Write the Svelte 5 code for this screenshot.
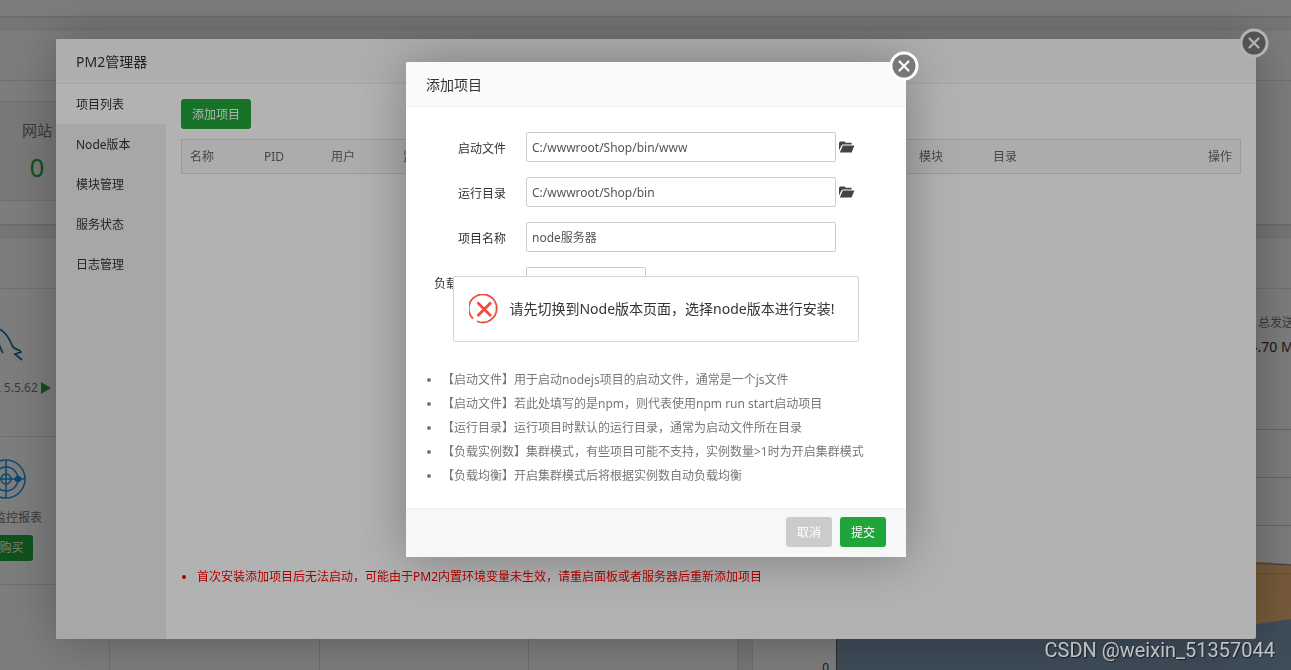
<script>
  const menu = ['项目列表', 'Node版本', '模块管理', '服务状态', '日志管理'];
  let active = $state('项目列表');

  const columns = [
    { title: '名称', cls: 'w-name' },
    { title: 'PID', cls: 'w-pid' },
    { title: '用户', cls: 'w-user' },
    { title: '监听端口', cls: '' },
    { title: '状态', cls: '' },
    { title: '重启', cls: '' },
    { title: '时间', cls: '' },
    { title: 'CPU', cls: '' },
    { title: '内存', cls: '' },
    { title: '模块', cls: 'w-module' },
    { title: '目录', cls: 'w-path' },
    { title: '操作', cls: 'w-action' }
  ];

  const tips = [
    '【启动文件】用于启动nodejs项目的启动文件，通常是一个js文件',
    '【启动文件】若此处填写的是npm，则代表使用npm run start启动项目',
    '【运行目录】运行项目时默认的运行目录，通常为启动文件所在目录',
    '【负载实例数】集群模式，有些项目可能不支持，实例数量>1时为开启集群模式',
    '【负载均衡】开启集群模式后将根据实例数自动负载均衡'
  ];

  let form = $state({
    run: 'C:/wwwroot/Shop/bin/www',
    path: 'C:/wwwroot/Shop/bin',
    name: 'node服务器',
    count: ''
  });
</script>

{#snippet closeIcon()}
  <svg viewBox="0 0 30 30" width="30" height="30" aria-hidden="true">
    <circle cx="15" cy="15" r="13" fill="#787878" stroke="#fff" stroke-width="3" />
    <path d="M10.5 10.5l9 9M19.5 10.5l-9 9" stroke="#fff" stroke-width="2.2" stroke-linecap="round" />
  </svg>
{/snippet}

{#snippet folderIcon()}
  <svg viewBox="0 0 16 12" width="16" height="12" aria-hidden="true">
    <path d="M0 9.5V1.8L1 .6h4.6l1 1.2h6v1.8h-9l-1.2.8z" fill="#444" />
    <path d="M3.8 4.5h11.6l-2.8 7H.8z" fill="#444" />
  </svg>
{/snippet}

<!-- dashboard under the windows -->
<div class="backdrop">
  <div class="dashboard">
    <div class="topbar"></div>
    <section class="card overview">
      <div class="card-head"></div>
      <div class="counts">
        <div class="count">
          <span>网站</span>
          <a href="#site">0</a>
        </div>
      </div>
    </section>
    <div class="halves">
      <section class="card">
        <div class="card-head"></div>
        <div class="softs">
          <div class="soft">
            <svg class="dolphin" viewBox="0 0 56 48" width="56" height="48" aria-hidden="true">
              <path d="M2 16C6 4 14 4 23 9C30 13 32 20 35 26C38 29 43 29 43 31L37 33L44 39" fill="none" stroke="#1c6f9f" stroke-width="1.8" />
              <path d="M20 22C22 25 23 29 25 32" fill="none" stroke="#1c6f9f" stroke-width="1.8" />
            </svg>
            <div class="soft-name">
              MySQL 5.5.62
              <svg viewBox="0 0 10 12" width="10" height="12" aria-hidden="true">
                <path d="M0 0L10 6L0 12z" fill="#20a53a" />
              </svg>
            </div>
          </div>
          <div class="soft"></div>
          <div class="soft"></div>
          <div class="soft"></div>
          <div class="soft">
            <svg viewBox="0 0 40 40" width="40" height="40" fill="none" stroke="#1296db" stroke-width="1.5" aria-hidden="true">
              <circle cx="20" cy="20" r="19" />
              <circle cx="20" cy="20" r="12" />
              <circle cx="20" cy="20" r="5" />
              <path d="M20 1V39M1 20H39" />
              <circle cx="32" cy="20" r="2.5" fill="#1296db" />
            </svg>
            <div class="soft-name">网站监控报表</div>
            <button class="buy">购买</button>
          </div>
          <div class="soft"></div>
          <div class="soft"></div>
          <div class="soft"></div>
          <div class="soft"></div>
          <div class="soft"></div>
          <div class="soft"></div>
          <div class="soft"></div>
        </div>
      </section>
      <section class="card">
        <div class="card-head"></div>
        <div class="stats">
          <div></div>
          <div></div>
          <div><span>总发送</span><b>4.70 MB</b></div>
          <div></div>
        </div>
        <div class="chart">
          <span class="zero">0</span>
          <svg viewBox="0 0 754 290" width="754" height="290" aria-hidden="true">
            <path d="M0 48.5H754M0 96.5H754M0 144.5H754" stroke="#ccc" />
            <path d="M0 200C200 170 400 178 456 183V290H0z" fill="#f2b97a" />
            <path d="M0 250H380L421 243L456 238V290H0z" fill="#7f9db6" />
            <path d="M380 182.500L420 182.500L456 184" fill="none" stroke="#7a8a99" />
            <path d="M420 192.500H456" stroke="#d3a069" />
            <path d="M.5 0V290" stroke="#555" />
          </svg>
        </div>
      </section>
    </div>
  </div>
</div>

<div class="layer shade manager-layer">
  <div class="window manager" role="dialog" aria-label="PM2管理器">
    <header>PM2管理器</header>
    <button class="close" aria-label="关闭">{@render closeIcon()}</button>
    <div class="manager-body">
      <nav>
        {#each menu as item}
          <button class:active={active === item} onclick={() => (active = item)}>{item}</button>
        {/each}
      </nav>
      <main>
        <button class="btn green">添加项目</button>
        <table>
          <thead>
            <tr>
              {#each columns as col}
                <th class={col.cls}>{col.title}</th>
              {/each}
            </tr>
          </thead>
        </table>
        <ul class="notice">
          <li>首次安装添加项目后无法启动，可能由于PM2内置环境变量未生效，请重启面板或者服务器后重新添加项目</li>
        </ul>
      </main>
    </div>
  </div>
</div>

<div class="layer shade add-layer">
  <form class="window add" aria-label="添加项目" onsubmit={(e) => e.preventDefault()}>
    <header>添加项目</header>
    <button type="button" class="close" aria-label="关闭">{@render closeIcon()}</button>
    <div class="fields">
      <div class="line">
        <label for="run">启动文件</label>
        <input id="run" type="text" bind:value={form.run} />
        <button type="button" class="pick" aria-label="选择文件">{@render folderIcon()}</button>
      </div>
      <div class="line">
        <label for="path">运行目录</label>
        <input id="path" type="text" bind:value={form.path} />
        <button type="button" class="pick" aria-label="选择目录">{@render folderIcon()}</button>
      </div>
      <div class="line">
        <label for="name">项目名称</label>
        <input id="name" type="text" bind:value={form.name} />
      </div>
      <div class="line">
        <label for="count">负载实例数量</label>
        <input id="count" class="short" type="text" bind:value={form.count} />
      </div>
    </div>
    <ul class="tips">
      {#each tips as tip}
        <li>{tip}</li>
      {/each}
    </ul>
    <footer>
      <button type="button" class="btn gray">取消</button>
      <button type="submit" class="btn green">提交</button>
    </footer>
  </form>
</div>

<div class="layer msg-layer">
  <div class="msg" role="alert">
    <svg viewBox="0 0 30 30" width="30" height="30" fill="none" stroke="#f04c3e" aria-hidden="true">
      <path d="M4 24.5A14 14 0 1 1 8 27.2" stroke-width="1.8" />
      <path d="M8.5 8.5L22 22M22 8.5L8.5 22" stroke-width="2.8" />
    </svg>
    <span>请先切换到Node版本页面，选择node版本进行安装!</span>
  </div>
</div>

<div class="watermark">CSDN @weixin_51357044</div>

<style>
  :global(body) {
    background: #f0f0f1;
  }

  :global(#app) {
    font: 12px/24px "Noto Sans", "Noto Sans CJK SC", sans-serif;
    color: #333;
  }

  button,
  input {
    box-sizing: border-box;
    font: inherit;
    color: inherit;
  }

  button {
    padding: 0;
    border: 0;
    background: none;
    cursor: pointer;
  }

  ul {
    margin: 0;
  }

  svg {
    display: block;
    flex: none;
  }

  /* dashboard, scrolled sideways behind the windows */
  .backdrop {
    height: 100vh;
    overflow: hidden;
  }

  .dashboard {
    min-width: 1689px;
    margin-left: -99px;
  }

  .topbar {
    height: 16px;
    margin-bottom: 15px;
    background: #fff;
    box-shadow: 0 1px 2px rgba(0, 0, 0, .15);
  }

  .card {
    background: #fff;
    box-shadow: 0 1px 2px rgba(0, 0, 0, .15);
  }

  .card-head {
    height: 49px;
    border-bottom: 1px solid #e4e4e4;
  }

  .overview {
    margin-bottom: 15px;
  }

  .counts {
    display: flex;
    padding: 20px 0 23px;
  }

  .count {
    display: flex;
    flex-direction: column;
    align-items: center;
    box-sizing: border-box;
    width: 272px;
    height: 100px;
    padding-top: 16px;
    border: 1px solid #e4e4e4;
    background: #f6f6f6;
    font-size: 15px;
    color: #777;
  }

  .count a {
    margin-top: 7px;
    font-size: 26px;
    line-height: 36px;
    color: #20a53a;
    text-decoration: none;
  }

  .halves {
    display: grid;
    grid-template-columns: 1fr 1fr;
    gap: 15px;
  }

  .softs {
    display: grid;
    grid-template-columns: repeat(4, 1fr);
  }

  .soft {
    display: flex;
    flex-direction: column;
    align-items: center;
    box-sizing: border-box;
    height: 148px;
    padding: 22px 0 0 2px;
    border-right: 1px solid #e0e0ee;
    border-bottom: 1px solid #e0e0ee;
    color: #777;
  }

  .dolphin {
    margin-top: 10px;
  }

  .soft-name {
    display: flex;
    align-items: center;
    gap: 3px;
    margin-top: 7px;
    white-space: nowrap;
  }

  .buy {
    height: 26px;
    margin-top: 5px;
    padding: 0 9px 0 20px;
    border-radius: 3px;
    background: #20a53a;
    color: #fff;
  }

  .stats {
    display: grid;
    grid-template-columns: repeat(4, 1fr);
    height: 92px;
    text-align: center;
    color: #777;
  }

  .stats div {
    display: flex;
    flex-direction: column;
    padding-top: 22px;
  }

  .stats b {
    font-size: 14px;
    font-weight: 400;
    color: #333;
  }

  .chart {
    display: flex;
    justify-content: flex-end;
    align-items: flex-end;
    gap: 7px;
  }

  .zero {
    line-height: 6px;
  }

  /* layered windows */
  .layer {
    position: fixed;
    inset: 0;
    display: flex;
    justify-content: center;
    align-items: flex-start;
    padding-left: 21px;
  }

  .shade {
    background: rgba(0, 0, 0, .3);
  }

  .manager-layer {
    padding-top: 39px;
  }

  .add-layer {
    padding-top: 62px;
  }

  .msg-layer {
    padding-top: 276px;
  }

  .window {
    position: relative;
    border-radius: 2px;
    background: #fff;
    box-shadow: 1px 1px 50px rgba(0, 0, 0, .3);
  }

  header {
    height: 44px;
    padding: 0 20px;
    border-bottom: 1px solid #eee;
    border-radius: 2px 2px 0 0;
    background: #fafafa;
    font-size: 14px;
    line-height: 46px;
  }

  .close {
    position: absolute;
    top: -11px;
    right: -13px;
  }

  .manager {
    width: 1200px;
    max-width: 93vw;
  }

  .manager-body {
    display: flex;
    min-height: 555px;
  }

  nav {
    display: flex;
    flex-direction: column;
    width: 110px;
    background: #f0f0f1;
  }

  nav button {
    height: 40px;
    padding: 2px 0 0 20px;
    text-align: left;
  }

  nav .active {
    background: #fff;
  }

  main {
    display: flex;
    flex: 1;
    flex-direction: column;
    align-items: flex-start;
    min-width: 0;
    padding: 15px;
  }

  .btn {
    height: 30px;
    padding: 2px 11px 0;
    border-radius: 3px;
    color: #fff;
  }

  .green {
    background: #20a53a;
  }

  .gray {
    background: #cbcbcb;
  }

  table {
    width: 100%;
    margin-top: 10px;
    border: 1px solid #ddd;
    border-spacing: 0;
    table-layout: fixed;
    background: #f6f6f6;
  }

  th {
    height: 33px;
    padding: 0 8px;
    font-weight: 400;
    line-height: 20px;
    text-align: left;
    white-space: nowrap;
    color: #666;
  }

  .w-name,
  .w-module {
    width: 58px;
  }

  .w-pid {
    width: 51px;
  }

  .w-user {
    width: 56px;
  }

  .w-path {
    width: 144px;
  }

  .w-action {
    width: 79px;
    text-align: right;
  }

  .notice {
    margin-top: auto;
    margin-bottom: 35px;
    padding-left: 16px;
    color: red;
  }

  .add {
    width: 500px;
    max-width: 93vw;
  }

  .fields {
    display: flex;
    flex-direction: column;
    gap: 15px;
    padding: 25px 0 15px;
  }

  .line {
    display: flex;
    align-items: center;
  }

  .line label {
    width: 100px;
    padding: 3px 20px 0 0;
    text-align: right;
  }

  .line input {
    width: 310px;
    height: 30px;
    padding: 0 5px;
    border: 1px solid #ccc;
    border-radius: 2px;
    background: #fff;
    color: #555;
  }

  .line .short {
    width: 120px;
  }

  .pick {
    margin-left: 3px;
  }

  .tips {
    padding: 56px 0 20px 36px;
    color: #777;
  }

  footer {
    display: flex;
    justify-content: flex-end;
    gap: 8px;
    padding: 8px 20px 10px;
    border-top: 1px solid #edf1f2;
    background: #f6f8f8;
  }

  .msg {
    display: flex;
    align-items: center;
    gap: 10px;
    padding: 17px 23px 17px 15px;
    border: 1px solid #d3d4d3;
    border-radius: 2px;
    background: #fff;
    font-size: 14px;
    line-height: 30px;
  }

  .watermark {
    position: fixed;
    right: 16px;
    bottom: 8px;
    font-family: Roboto, sans-serif;
    font-size: 20px;
    color: rgba(255, 255, 255, .7);
    text-shadow: 1px 1px 1px rgba(0, 0, 0, .6);
  }
</style>
